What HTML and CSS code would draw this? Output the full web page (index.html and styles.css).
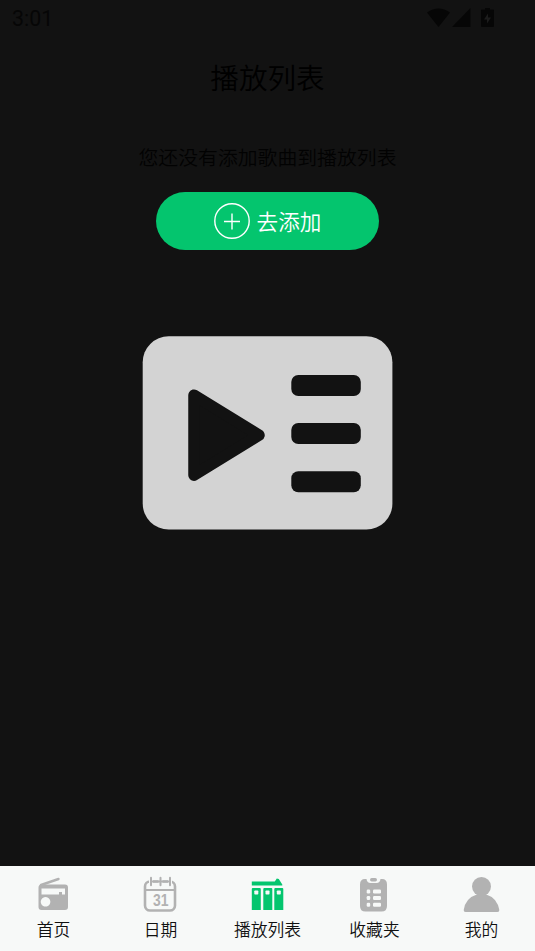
FILE: index.html
```html
<!DOCTYPE html>
<html lang="zh-CN">
<head>
<meta charset="utf-8">
<title>播放列表</title>
<link rel="stylesheet" href="styles.css">
</head>
<body>
<div class="app">
  <header class="status">
    <span class="time">3:01</span>
    <svg class="status-icons" width="68" height="22" viewBox="0 0 68 22">
      <path d="M0 4.500Q11.500-3.500 23 4.500L11.500 19Z"/>
      <path d="M25 19 43.500 0V19Z"/>
      <path d="M55 1.500h3V0h5v1.500h3q1 0 1 1V18q0 1-1 1H55q-1 0-1-1V2.500q0-1 1-1Z"/>
      <path class="bolt" d="M61 5.500v4h3l-4 6v-4h-3Z"/>
    </svg>
  </header>
  <main class="main">
    <h1 class="title">播放列表</h1>
    <p class="empty">您还没有添加歌曲到播放列表</p>
    <button class="add">
      <svg width="36" height="36" viewBox="0 0 36 36"><circle cx="18" cy="18" r="17.200"/><path d="M10 18.500h16M18 10.500v16"/></svg>
      <span class="add-label">去添加</span>
    </button>
    <svg class="art" width="251" height="194" viewBox="0 0 251 194">
      <rect class="card" x=".7" y=".3" width="249.700" height="193.200" rx="26"/>
      <path class="tri" d="M52 59.200v80L117 99.200Z"/>
      <rect x="149.300" y="39" width="69.500" height="21" rx="7"/>
      <rect x="149.300" y="87" width="69.500" height="21" rx="7"/>
      <rect x="149.300" y="135.300" width="69.500" height="21" rx="7"/>
    </svg>
  </main>
  <nav class="nav">
    <a class="tab">
      <svg width="37" height="36" viewBox="0 0 37 36"><path d="M6 9 23.500 3" fill="none" stroke="#b2b2b2" stroke-width="2.400" stroke-linecap="round"/><path fill-rule="evenodd" d="M6.500 8.500h23.500q3 0 3 3v19.500q0 3-3 3h-23.500q-3 0-3-3V11.500q0-3 3-3ZM6.500 12.500V18.500H24V16h3v2.500h3v-6ZM10.500 21a4.800 4.800 0 1 0 .1 0Z"/></svg>
      <span>首页</span>
    </a>
    <a class="tab">
      <svg width="37" height="36" viewBox="0 0 37 36"><g fill="none" stroke="#b2b2b2"><rect x="3" y="5.500" width="30" height="29" rx="5" stroke-width="2.600"/><path d="M3 14h30" stroke-width="2"/><path d="M9 2v8M18.500 2v8M28 2v8" stroke="#f7f9f8" stroke-width="4"/><path d="M9 1.800v7.500M18.500 1.800v7.500M28 1.800v7.500M9 5.500h19" stroke-width="2" stroke-linecap="round"/></g><text class="day" x="11" y="30" textLength="15.500" lengthAdjust="spacingAndGlyphs">31</text></svg>
      <span>日期</span>
    </a>
    <a class="tab active">
      <svg width="37" height="36" viewBox="0 0 37 36"><g transform="translate(.8)"><path d="M2 5.500H25l2-3 2 .5 3.500 5.500V9.500H2ZM2 13q0-1 1-1h7q1 0 1 1v21H2ZM13.500 13q0-1 1-1h7q1 0 1 1v21h-9ZM24.500 13q0-1 1-1h7q1 0 1 1v21h-9Z"/><g fill="#f7f9f8"><rect x="4.500" y="14.500" width="4" height="4" rx=".8"/><rect x="15.700" y="14.500" width="4" height="4" rx=".8"/><rect x="27" y="14.500" width="4" height="4" rx=".8"/></g></g></svg>
      <span>播放列表</span>
    </a>
    <a class="tab">
      <svg width="37" height="36" viewBox="0 0 37 36"><path d="M9 3h1.500q.5 4 4 4h6q3.500 0 4-4H26q5 0 5 5.500V30q0 5.500-5.500 5.500H9.500Q4 35.500 4 30V8.500Q4 3 9 3Z"/><rect x="14" y="2" width="7" height="3.500" rx="1.700"/><g fill="#f7f9f8"><rect x="10.700" y="13.500" width="3.500" height="4" rx="1.200"/><rect x="17" y="13.500" width="8" height="4" rx="1.200"/><rect x="10.700" y="20" width="3.500" height="4" rx="1.200"/><rect x="17" y="20" width="8" height="4" rx="1.200"/><rect x="10.700" y="26.700" width="3.500" height="4" rx="1.200"/><rect x="17" y="26.700" width="8" height="4" rx="1.200"/></g></svg>
      <span>收藏夹</span>
    </a>
    <a class="tab">
      <svg width="37" height="36" viewBox="0 0 37 36"><circle cx="18.500" cy="10.500" r="9.500"/><path d="M13.800 18.500h9.500Q34.300 22 36.300 34q.2 2-1.800 2H2.500q-2 0-1.800-2Q2.500 22 13.800 18.500Z"/></svg>
      <span>我的</span>
    </a>
  </nav>
</div>
</body>
</html>
```
FILE: styles.css
```css
* {
  box-sizing: border-box;
}

body {
  margin: 0;
  background: #121212;
  font-family: Roboto, "Noto Sans CJK SC", sans-serif;
  font-weight: 350;
}

.app {
  display: flex;
  flex-direction: column;
  height: 951px;
}

.status {
  display: flex;
  justify-content: space-between;
  height: 39px;
  padding: 8px 40px 0 12px;
  color: #060606;
}

.time {
  font-size: 21.400px;
  font-weight: 400;
  line-height: 21px;
}

.status-icons {
  fill: #060606;
}

.status-icons .bolt {
  fill: #1c1c1c;
}

.main {
  flex: 1;
  display: flex;
  flex-direction: column;
  align-items: center;
}

.title {
  margin: 19px 0 0;
  font-size: 28.600px;
  font-weight: 350;
  line-height: 42px;
  color: #000;
}

.empty {
  margin: 44px 0 0;
  font-size: 19.850px;
  line-height: 30px;
  color: #020202;
}

.add {
  display: flex;
  align-items: center;
  justify-content: center;
  gap: 7px;
  width: 223px;
  height: 58px;
  margin-top: 18px;
  padding: 0;
  border: 0;
  border-radius: 29px;
  background: #04c56e;
  color: #fff;
  font: inherit;
  font-size: 21.600px;
  line-height: 32px;
}

.add svg {
  fill: none;
  stroke: #fff;
  stroke-width: 1.400;
}

.add-label {
  padding-top: 4px;
}

.art {
  margin-top: 86px;
  fill: #121212;
}

.art .card {
  fill: #d3d3d3;
}

.art .tri {
  stroke: #121212;
  stroke-width: 11.500;
  stroke-linejoin: round;
}

.nav {
  display: grid;
  grid-template-columns: repeat(5, 1fr);
  height: 85px;
  background: #f7f9f8;
}

.tab {
  display: flex;
  flex-direction: column;
  align-items: center;
  padding-top: 10px;
  font-size: 16.800px;
  line-height: 24px;
  color: #111;
}

.tab svg {
  fill: #b2b2b2;
  margin-bottom: 6px;
}

.tab.active svg {
  fill: #04c56e;
}

.day {
  font: 700 17px "Liberation Sans", sans-serif;
}
```
